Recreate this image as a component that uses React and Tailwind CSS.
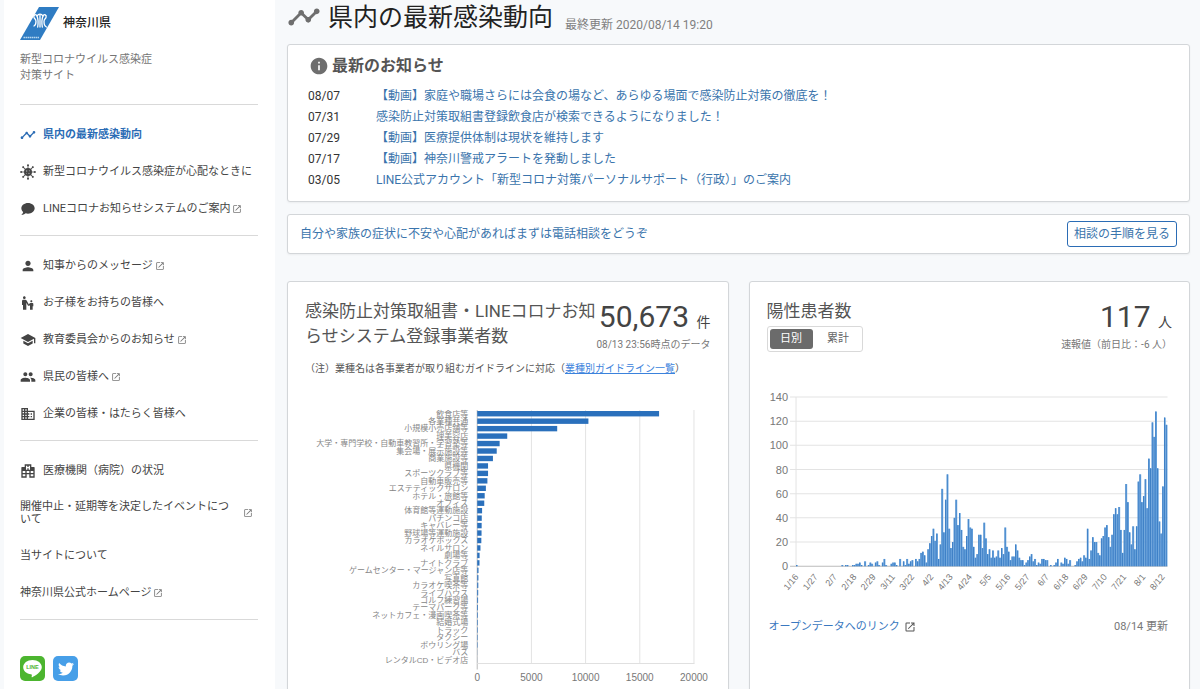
import React, { useState } from 'react';
import { MdTimeline, MdPerson, MdEscalatorWarning, MdSchool, MdPeople, MdBusiness, MdOpenInNew, MdInfo } from 'react-icons/md';
import { FaTwitter } from 'react-icons/fa';

const ChatIcon = ({ className }) => (
    <svg viewBox="0 0 24 24" fill="currentColor" className={className} aria-hidden="true">
        <path d="M12,3C17.5,3 22,6.58 22,11C22,15.42 17.5,19 12,19C10.76,19 9.57,18.82 8.47,18.5C5.55,21 2,21 2,21C4.33,18.67 4.7,17.1 4.75,16.5C3.05,15.07 2,13.13 2,11C2,6.58 6.5,3 12,3Z" />
    </svg>
);

const VirusIcon = ({ className }) => (
    <svg viewBox="0 0 24 24" fill="currentColor" className={className} aria-hidden="true">
        <circle cx="12" cy="12" r="6" />
        {[0, 45, 90, 135, 180, 225, 270, 315].map((angle) => (
            <g key={angle} transform={`rotate(${angle} 12 12)`}>
                <path d="M11.4 2H12.6V7H11.4Z" />
                <circle cx="12" cy="1.700" r="1.500" />
            </g>
        ))}
        <g fill="#fff" opacity=".6">
            <circle cx="10" cy="10.5" r="1" />
            <circle cx="14" cy="10" r=".8" />
            <circle cx="13.5" cy="14" r="1" />
            <circle cx="9.8" cy="14" r=".7" />
        </g>
    </svg>
);

const HospitalIcon = ({ className }) => (
    <svg viewBox="0 0 24 24" fill="currentColor" className={className} aria-hidden="true">
        <path d="M2,22V7A1,1 0 0,1 3,6H7V2H17V6H21A1,1 0 0,1 22,7V22H14V17H10V22H2M9,4V10H11V8H13V10H15V4H13V6H11V4H9M4,20H8V17H4V20M4,15H8V12H4V15M16,20H20V17H16V20M16,15H20V12H16V15M10,15H14V12H10V15Z" />
    </svg>
);

const NAV_GROUPS = [
    [
        { label: '県内の最新感染動向', icon: MdTimeline, active: true },
        { label: '新型コロナウイルス感染症が心配なときに', icon: VirusIcon },
        { label: 'LINEコロナお知らせシステムのご案内', icon: ChatIcon, external: true },
    ],
    [
        { label: '知事からのメッセージ', icon: MdPerson, external: true },
        { label: 'お子様をお持ちの皆様へ', icon: MdEscalatorWarning },
        { label: '教育委員会からのお知らせ', icon: MdSchool, external: true },
        { label: '県民の皆様へ', icon: MdPeople, external: true },
        { label: '企業の皆様・はたらく皆様へ', icon: MdBusiness },
    ],
    [
        { label: '医療機関（病院）の状況', icon: HospitalIcon },
        { label: '開催中止・延期等を決定したイベントについて', external: true },
        { label: '当サイトについて' },
        { label: '神奈川県公式ホームページ', external: true },
    ],
];

const NEWS = [
    { date: '08/07', text: '【動画】家庭や職場さらには会食の場など、あらゆる場面で感染防止対策の徹底を！' },
    { date: '07/31', text: '感染防止対策取組書登録飲食店が検索できるようになりました！' },
    { date: '07/29', text: '【動画】医療提供体制は現状を維持します' },
    { date: '07/17', text: '【動画】神奈川警戒アラートを発動しました' },
    { date: '03/05', text: 'LINE公式アカウント「新型コロナ対策パーソナルサポート（行政）」のご案内' },
];

const INDUSTRIES = [
    ['飲食店等', 16780], ['各業種共通', 10260], ['小規模小売店舗等', 7380], ['理美容店', 2770],
    ['大学・専門学校・自動車教習所・学習塾等', 2070], ['集会場・展示施設等', 1800], ['商業施設等', 1450],
    ['県機関', 1000], ['スポーツクラブ等', 1000], ['自動車販売等', 940], ['エステティックサロン', 800],
    ['ホテル・旅館等', 690], ['オフィス', 650], ['体育館等運動施設', 450], ['パチンコ店', 420],
    ['キャバレー等', 410], ['野球場等運動施設', 400], ['カラオケボックス', 380], ['ネイルサロン', 300],
    ['劇場等', 220], ['ナイトクラブ', 210], ['ゲームセンター・マージャン店等', 120], ['写真館', 110],
    ['カラオケ喫茶等', 100], ['ライブハウス', 90], ['ゴルフ練習場', 80], ['テーマパーク等', 70],
    ['ネットカフェ・漫画喫茶等', 60], ['結婚式場', 55], ['トラック', 50], ['タクシー', 45],
    ['ボウリング場', 40], ['バス', 10], ['レンタルCD・ビデオ店', 5],
];

// daily positives, 1/16 - 8/14
const DAILY = [
    1, 0, 0, 0, 0, 0, 0, 0, 0, 0, 0, 0, 0, 0, 0, 0, 0, 0, 0, 0,
    0, 0, 0, 0, 0, 0, 1, 0, 1, 1, 0, 0, 1, 1, 2, 2, 3, 1, 0, 4,
    0, 1, 3, 2, 0, 3, 4, 1, 0, 3, 6, 1, 0, 0, 2, 3, 3, 1, 0, 6,
    0, 4, 1, 6, 2, 4, 5, 0, 6, 4, 6, 11, 12, 9, 3, 14, 19, 25, 31, 21,
    27, 6, 18, 64, 28, 55, 76, 31, 15, 20, 40, 55, 34, 44, 30, 16, 14, 25, 39, 32,
    31, 16, 7, 10, 26, 26, 15, 36, 23, 10, 14, 7, 13, 7, 8, 13, 7, 15, 10, 32,
    16, 12, 5, 8, 8, 18, 13, 7, 5, 5, 1, 3, 5, 8, 10, 4, 6, 1, 3, 2,
    6, 6, 5, 5, 0, 1, 0, 1, 3, 6, 0, 3, 2, 7, 6, 2, 5, 0, 0, 1,
    4, 6, 7, 4, 9, 7, 31, 6, 13, 24, 20, 20, 11, 9, 23, 25, 32, 34, 24, 16,
    26, 43, 48, 43, 49, 30, 11, 30, 68, 53, 28, 18, 33, 14, 33, 70, 76, 53, 58, 72,
    48, 89, 81, 119, 107, 128, 81, 37, 27, 66, 123, 117,
];

const DAY_LABELS = [
    '1/16', '1/27', '2/7', '2/18', '2/29', '3/11', '3/22', '4/2', '4/13', '4/24',
    '5/5', '5/16', '5/27', '6/7', '6/18', '6/29', '7/10', '7/21', '8/1', '8/12',
];

function NavItem({ item }) {
    const Icon = item.icon;
    return (
        <li>
            <a
                href="#"
                className={
                    'flex min-h-[21px] items-center ' +
                    (item.active ? 'font-bold text-[#2b6cb5]' : 'text-[#444]')
                }
            >
                {Icon && <Icon className="mr-[7px] size-4 shrink-0" />}
                <span className="py-[3px]">{item.label}</span>
                {item.external && <MdOpenInNew className={'size-[10px] shrink-0 text-[#777] ' + (item.label.length > 20 ? 'mr-[5px] ml-2' : 'ml-[2px]')} />}
            </a>
        </li>
    );
}

function Sidebar() {
    return (
        <aside className="ml-1 w-[271px] shrink-0 bg-white pt-[7px] pr-[17px] pl-4 text-[11px] leading-[13px]">
            <header className="border-b border-[#d9d9d9] pb-5">
                <a href="#" className="flex items-center gap-1 text-[12px] font-medium text-[#222]">
                    <svg viewBox="0 0 39 33" className="h-[33px] w-[39px]" role="img" aria-label="logo">
                        <path d="M19 0H39L20 33H0Z" fill="#2f7cc3" />
                        <g fill="none" stroke="#fff" strokeWidth="1.3" strokeLinecap="round">
                            <path d="M20 8V20" />
                            <path d="M17.7 20C18.3 16 18.3 12 17 9C16 6.5 13 8 14 10.5C14.5 12 16 12 16 14.5C16 17 15 18.5 14 19" />
                            <path d="M22.3 20C21.7 16 21.7 12 23 9C24 6.5 27 8 26 10.5C25.5 12 24 12 24 14.5C24 17 25 19.5 26.5 20" />
                            <path d="M17 9C18.5 6.5 21.5 6.5 23 9" />
                        </g>
                        <path d="M3.5 30.5H19" stroke="#b7d6ee" strokeWidth="1.5" strokeDasharray="1.5 .5" />
                    </svg>
                    神奈川県
                </a>
                <p className="mt-3 leading-4 text-[#757575]">
                    新型コロナウイルス感染症<br />対策サイト
                </p>
            </header>
            <nav>
                {NAV_GROUPS.map((group, i) => (
                    <ul key={i} className="flex flex-col gap-4 border-b border-[#d9d9d9] pt-[19px] pb-4">
                        {group.map((item) => <NavItem key={item.label} item={item} />)}
                    </ul>
                ))}
            </nav>
            <div className="mt-9 flex gap-2">
                <a href="#" aria-label="LINE">
                    <svg viewBox="0 0 25 25" className="size-[25px]">
                        <rect width="25" height="25" rx="5" fill="#4cb52f" />
                        <path d="M12.5 4C7.3 4 3.2 7.2 3.2 11.2C3.2 14.8 6.5 17.7 11 18.3C12.3 18.6 11.8 19.5 11.6 21C11.6 21.4 11.9 21.4 12.3 21.2C15 19.8 21.8 15.8 21.8 11.2C21.8 7.2 17.7 4 12.5 4Z" fill="#fff" />
                        <text x="12.5" y="13.3" textAnchor="middle" fontSize="5.5" className="font-['Liberation_Sans',sans-serif] font-bold" fill="#4cb52f">LINE</text>
                    </svg>
                </a>
                <a href="#" aria-label="Twitter" className="flex size-[25px] items-center justify-center rounded-[5px] bg-[#479fe8]">
                    <FaTwitter className="size-4 text-white" />
                </a>
            </div>
        </aside>
    );
}

function IndustryChart() {
    const left = 172;
    const top = 10;
    const row = 7.45;
    const bottom = top + row * INDUSTRIES.length;
    const scale = 216.5 / 20000;
    return (
        <svg viewBox="0 0 405 290" className="mt-[23px] w-full font-['Liberation_Sans','Noto_Sans_CJK_JP',sans-serif]">
            {[0, 5000, 10000, 15000, 20000].map((v) => (
                <g key={v}>
                    <line x1={left + v * scale} x2={left + v * scale} y1={top} y2={bottom + (v === 0 ? 6 : 0)} stroke={v === 0 ? '#bbb' : '#e3e3e3'} />
                    <text x={left + v * scale} y="281" textAnchor="middle" fontSize="10" fill="#777">{v}</text>
                </g>
            ))}
            <line x1={left} x2="389" y1={bottom} y2={bottom} stroke="#e0e0e0" />
            {INDUSTRIES.map(([name, value], i) => (
                <g key={name}>
                    <text x="163" y={top + row * i + 6.5} textAnchor="end" fontSize="8" fill="#868686">{name}</text>
                    <rect x={left} y={top + row * i + 1} width={value * scale} height="5.4" fill="#2a70bc" />
                </g>
            ))}
        </svg>
    );
}

function PatientsChart({ values, max, step }) {
    const left = 29;
    const bottom = 177;
    const day = 371 / values.length;
    const scale = 169 / max;
    const ticks = [];
    for (let v = 0; v <= max; v += step) ticks.push(v);
    return (
        <svg viewBox="0 0 405 210" className="mt-9 w-full font-['Liberation_Sans',sans-serif]">
            {ticks.map((v) => (
                <g key={v}>
                    <line x1="23" x2="400" y1={bottom - v * scale} y2={bottom - v * scale} stroke={v === 0 ? '#bbb' : '#e3e3e3'} />
                    <text x="21" y={bottom - v * scale + 4} textAnchor="end" fontSize="11" fill="#777">{v}</text>
                </g>
            ))}
            <line x1={left} x2={left} y1={bottom - 169} y2={bottom} stroke="#e3e3e3" />
            {values.map((v, i) => (
                <g key={i}>
                    <rect x={left + day * i} y={bottom - v * scale} width={day} height={v * scale} fill="#6ba6e0" />
                    <rect x={left + day * i} y={bottom - v * scale} width="1" height={v * scale} fill="#3f80c6" />
                </g>
            ))}
            {DAY_LABELS.map((label, i) => {
                const x = left + 3 + i * 11 * day;
                return (
                    <text key={label} x={x} y="188" textAnchor="end" fontSize="9" fill="#777" transform={`rotate(-50 ${x} 188)`}>{label}</text>
                );
            })}
        </svg>
    );
}

function DataCard({ title, value, unit, note, children, controls }) {
    return (
        <section className="min-w-0 flex-1 rounded-[3px] border border-[#d3d6d9] bg-white px-[17px] pt-[17px] pb-5 shadow-xs">
            <div className="flex justify-between">
                <div>
                    <h3 className="text-[17px] leading-[25px] text-[#555]">{title}</h3>
                    {controls}
                </div>
                <div className="shrink-0 text-right whitespace-nowrap">
                    <p className="mt-[3px] text-[30px] leading-[30px] text-[#444]">
                        {value} <span className="text-[14px]">{unit}</span>
                    </p>
                    <p className="text-[10px] leading-4 text-[#777]">{note}</p>
                </div>
            </div>
            {children}
        </section>
    );
}

export default function App() {
    const [mode, setMode] = useState('daily');

    let sum = 0;
    const total = DAILY.map((v) => (sum += v));

    const toggleClass = (on) =>
        'w-[43px] rounded-[3px] text-[11px] leading-5 ' + (on ? 'bg-[#6b6b6b] text-white' : 'text-[#666]');

    return (
        <div className="flex h-screen overflow-hidden bg-[#f7f9fb] font-['Roboto','Noto_Sans_CJK_JP',sans-serif]">
            <Sidebar />
            <main className="min-w-0 flex-1 pr-[10px] pl-3">
                <div className="flex h-[44px] items-start">
                    <MdTimeline className="mr-[7px] size-[34px] text-[#6e6e6e]" />
                    <h2 className="text-[25px] leading-[36px] text-[#222]">県内の最新感染動向</h2>
                    <p className="mt-[17px] ml-3 text-[12px] leading-4 text-[#808080]">最終更新 2020/08/14 19:20</p>
                </div>

                <section className="rounded-[3px] border border-[#d3d6d9] bg-white px-5 pt-[10px] pb-[10px] shadow-xs">
                    <h3 className="ml-px flex items-center gap-[3px] text-[16px] leading-[22px] font-bold text-[#555]">
                        <MdInfo className="size-5 text-[#6e6e6e]" />
                        最新のお知らせ
                    </h3>
                    <ul className="mt-[9px] text-[12px] leading-[21px]">
                        {NEWS.map((item) => (
                            <li key={item.date} className="flex">
                                <time className="w-[68px] text-[#333]">{item.date}</time>
                                <a href="#" className="text-[#3a74ac]">{item.text}</a>
                            </li>
                        ))}
                    </ul>
                </section>

                <section className="mt-3 flex items-center justify-between rounded-[3px] border border-[#d3d6d9] bg-white py-[6px] pr-3 pl-3 text-[12px] text-[#3a74ac] shadow-xs">
                    <p>自分や家族の症状に不安や心配があればまずは電話相談をどうぞ</p>
                    <button type="button" className="rounded-[3px] border border-[#2b6cb5] px-[6px] leading-6">相談の手順を見る</button>
                </section>

                <div className="mt-[27px] flex items-stretch gap-5">
                    <DataCard
                        title="感染防止対策取組書・LINEコロナお知らせシステム登録事業者数"
                        value="50,673"
                        unit="件"
                        note="08/13 23:56時点のデータ"
                    >
                        <p className="mt-2 text-[10px] leading-4 text-[#555]">
                            （注）業種名は各事業者が取り組むガイドラインに対応（<a href="#" className="text-[#3b82dc] underline">業種別ガイドライン一覧</a>）
                        </p>
                        <IndustryChart />
                    </DataCard>

                    <DataCard
                        title="陽性患者数"
                        value="117"
                        unit="人"
                        note="速報値（前日比：-6 人）"
                        controls={
                            <div className="mt-[2px] flex w-fit gap-1 rounded-[3px] border border-[#d9d9d9] p-[2px]">
                                <button type="button" onClick={() => setMode('daily')} className={toggleClass(mode === 'daily')}>日別</button>
                                <button type="button" onClick={() => setMode('total')} className={toggleClass(mode === 'total')}>累計</button>
                            </div>
                        }
                    >
                        {mode === 'daily'
                            ? <PatientsChart values={DAILY} max={140} step={20} />
                            : <PatientsChart values={total} max={4000} step={500} />}
                        <div className="mt-5 flex items-center justify-between text-[11px] leading-4">
                            <a href="#" className="ml-[2px] flex items-center gap-1 text-[#3a78c0]">
                                オープンデータへのリンク <MdOpenInNew className="size-3 text-[#555]" />
                            </a>
                            <span className="pr-1 text-[#777]">08/14 更新</span>
                        </div>
                    </DataCard>
                </div>
            </main>
        </div>
    );
}
